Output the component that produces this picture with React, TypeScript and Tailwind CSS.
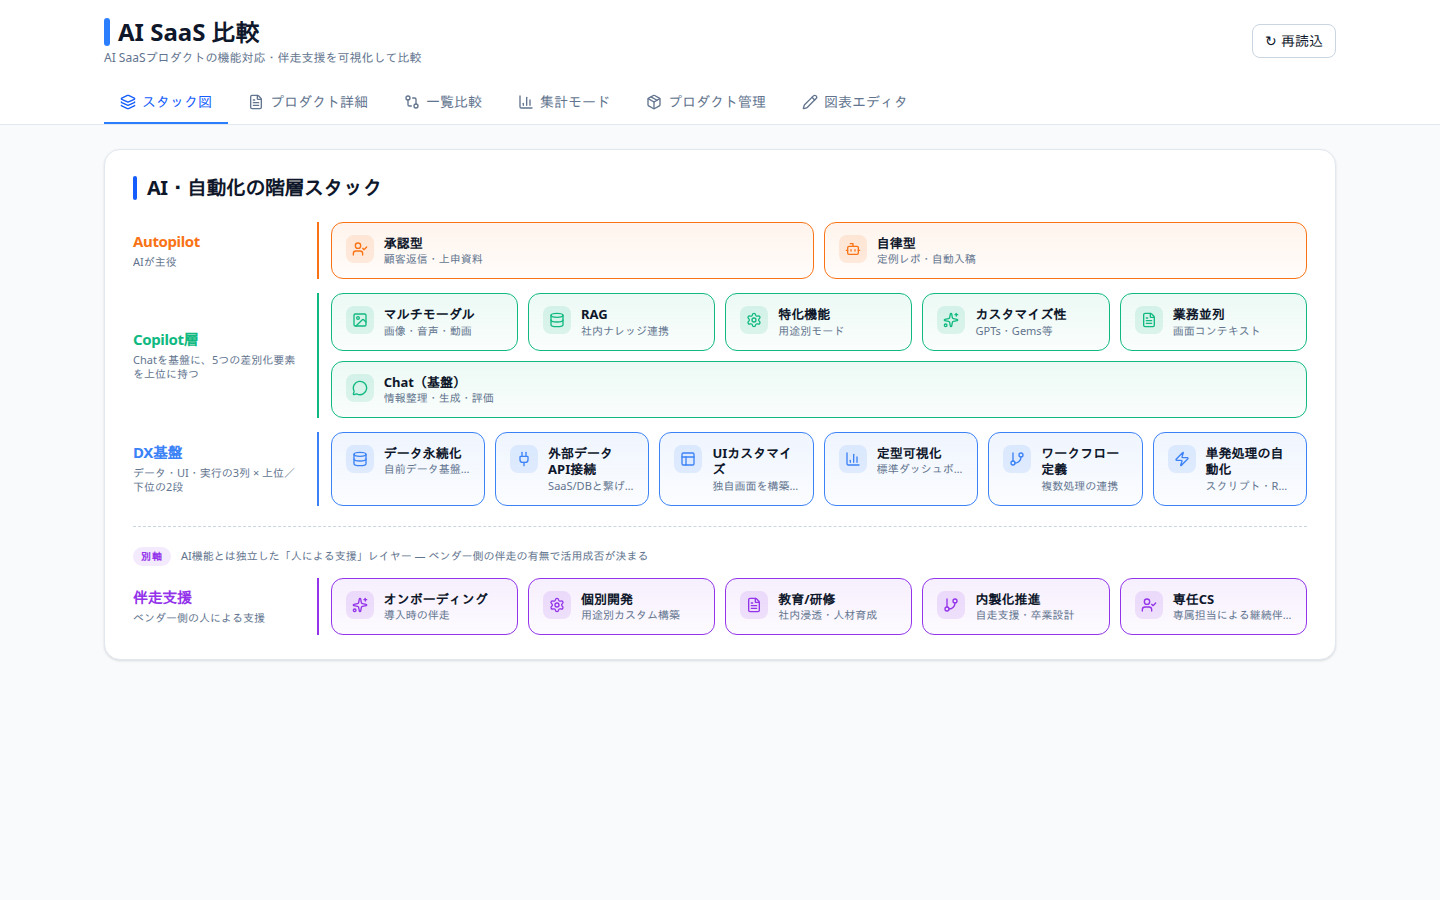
import React from 'react';
import {
  ChartColumn,
  Database,
  FileText,
  GitBranch,
  GitCompare,
  Image,
  Layers,
  MessageCircle,
  Package,
  PanelsTopLeft,
  Pencil,
  Plug,
  Settings,
  Sparkles,
  Bot,
  UserCheck,
  Zap,
  type LucideIcon,
} from 'lucide-react';

type Tone = 'orange' | 'green' | 'blue' | 'purple';

type Item = { icon: LucideIcon; title: string; sub: string };

type Layer = {
  name: string;
  desc: string;
  tone: Tone;
  rows: { cols: string; items: Item[] }[];
};

const TONES: Record<Tone, { text: string; line: string; card: string; chip: string }> = {
  orange: {
    text: 'text-[#f97316]',
    line: 'border-[#f97316]',
    card: 'border-[#f97316] from-[#f97316]/8 to-[#f97316]/2',
    chip: 'bg-[#f97316]/12 text-[#f97316]',
  },
  green: {
    text: 'text-[#10b981]',
    line: 'border-[#10b981]',
    card: 'border-[#10b981] from-[#10b981]/8 to-[#10b981]/2',
    chip: 'bg-[#10b981]/12 text-[#10b981]',
  },
  blue: {
    text: 'text-[#3b82f6]',
    line: 'border-[#3b82f6]',
    card: 'border-[#3b82f6] from-[#3b82f6]/8 to-[#3b82f6]/2',
    chip: 'bg-[#3b82f6]/12 text-[#3b82f6]',
  },
  purple: {
    text: 'text-[#9333ea]',
    line: 'border-[#9333ea]',
    card: 'border-[#9333ea] from-[#9333ea]/8 to-[#9333ea]/2',
    chip: 'bg-[#9333ea]/12 text-[#9333ea]',
  },
};

const TABS: { icon: LucideIcon; label: string }[] = [
  { icon: Layers, label: 'スタック図' },
  { icon: FileText, label: 'プロダクト詳細' },
  { icon: GitCompare, label: '一覧比較' },
  { icon: ChartColumn, label: '集計モード' },
  { icon: Package, label: 'プロダクト管理' },
  { icon: Pencil, label: '図表エディタ' },
];

const LAYERS: Layer[] = [
  {
    name: 'Autopilot',
    desc: 'AIが主役',
    tone: 'orange',
    rows: [
      {
        cols: 'grid-cols-2',
        items: [
          { icon: UserCheck, title: '承認型', sub: '顧客返信・上申資料' },
          { icon: Bot, title: '自律型', sub: '定例レポ・自動入稿' },
        ],
      },
    ],
  },
  {
    name: 'Copilot層',
    desc: 'Chatを基盤に、5つの差別化要素を上位に持つ',
    tone: 'green',
    rows: [
      {
        cols: 'grid-cols-5',
        items: [
          { icon: Image, title: 'マルチモーダル', sub: '画像・音声・動画' },
          { icon: Database, title: 'RAG', sub: '社内ナレッジ連携' },
          { icon: Settings, title: '特化機能', sub: '用途別モード' },
          { icon: Sparkles, title: 'カスタマイズ性', sub: 'GPTs・Gems等' },
          { icon: FileText, title: '業務並列', sub: '画面コンテキスト' },
        ],
      },
      {
        cols: 'grid-cols-1',
        items: [{ icon: MessageCircle, title: 'Chat（基盤）', sub: '情報整理・生成・評価' }],
      },
    ],
  },
  {
    name: 'DX基盤',
    desc: 'データ・UI・実行の3列 × 上位／下位の2段',
    tone: 'blue',
    rows: [
      {
        cols: 'grid-cols-6',
        items: [
          { icon: Database, title: 'データ永続化', sub: '自前データ基盤を持つ' },
          { icon: Plug, title: '外部データAPI接続', sub: 'SaaS/DBと繋げられる' },
          { icon: PanelsTopLeft, title: 'UIカスタマイズ', sub: '独自画面を構築できる' },
          { icon: ChartColumn, title: '定型可視化', sub: '標準ダッシュボード' },
          { icon: GitBranch, title: 'ワークフロー定義', sub: '複数処理の連携' },
          { icon: Zap, title: '単発処理の自動化', sub: 'スクリプト・RPA化' },
        ],
      },
    ],
  },
];

const SUPPORT: Layer = {
  name: '伴走支援',
  desc: 'ベンダー側の人による支援',
  tone: 'purple',
  rows: [
    {
      cols: 'grid-cols-5',
      items: [
        { icon: Sparkles, title: 'オンボーディング', sub: '導入時の伴走' },
        { icon: Settings, title: '個別開発', sub: '用途別カスタム構築' },
        { icon: FileText, title: '教育/研修', sub: '社内浸透・人材育成' },
        { icon: GitBranch, title: '内製化推進', sub: '自走支援・卒業設計' },
        { icon: UserCheck, title: '専任CS', sub: '専属担当による継続伴走' },
      ],
    },
  ],
};

function StackCard({ item, tone }: { item: Item; tone: Tone }) {
  const Icon = item.icon;
  return (
    <div
      className={`flex min-w-0 items-start gap-2.5 rounded-xl border bg-linear-to-b px-3.5 py-3 ${TONES[tone].card}`}
    >
      <span
        className={`flex size-7 shrink-0 items-center justify-center rounded-lg ${TONES[tone].chip}`}
      >
        <Icon size={16} />
      </span>
      <div className="min-w-0 flex-1">
        <div className="text-[13px] leading-[16.25px] font-bold text-slate-900">{item.title}</div>
        <div className="truncate text-[11px] leading-[15.125px] text-slate-500">{item.sub}</div>
      </div>
    </div>
  );
}

function LayerRow({ layer }: { layer: Layer }) {
  return (
    <section className="grid grid-cols-[167.72px_1fr] gap-4">
      <div className="flex flex-col justify-center pb-0.5">
        <div
          className={`text-[15px] leading-[22px] font-bold tracking-tight ${TONES[layer.tone].text}`}
        >
          {layer.name}
        </div>
        <div className="mt-[3px] text-[11px] leading-[14.3px] text-slate-500">{layer.desc}</div>
      </div>
      <div className={`flex min-w-0 flex-col gap-2.5 border-l-2 pl-3 ${TONES[layer.tone].line}`}>
        {layer.rows.map((row, i) => (
          <div key={i} className={`grid gap-2.5 ${row.cols}`}>
            {row.items.map((item) => (
              <StackCard key={item.title} item={item} tone={layer.tone} />
            ))}
          </div>
        ))}
      </div>
    </section>
  );
}

export default function App() {
  const [active, setActive] = React.useState(0);

  return (
    <div
      lang="ja"
      className="min-h-screen bg-slate-50 font-['Noto_Sans','IPAGothic','Noto_Sans_CJK_JP',sans-serif] text-slate-900"
    >
      <header className="border-b border-slate-200 bg-white">
        <div className="mx-auto max-w-[1280px] px-6 pt-4">
          <div className="flex h-[50px] items-center justify-between">
            <div>
              <h1 className="flex items-center gap-2 text-2xl font-bold">
                <span className="h-7 w-1.5 rounded-sm bg-[#2b7fff]" />
                AI SaaS 比較
              </h1>
              <p className="mt-0.5 text-xs text-slate-500">
                AI SaaSプロダクトの機能対応・伴走支援を可視化して比較
              </p>
            </div>
            <button className="h-[34px] rounded-lg border border-slate-300 bg-white px-3 text-sm">
              ↻ 再読込
            </button>
          </div>
          <nav className="mt-3.5 flex gap-1">
            {TABS.map(({ icon: Icon, label }, i) => (
              <button
                key={label}
                onClick={() => setActive(i)}
                className={`flex h-11 items-center gap-1.5 border-b-2 px-4 pt-0.5 text-sm ${
                  i === active
                    ? 'border-[#2b7fff] text-[#155dfc]'
                    : 'border-transparent text-slate-500'
                }`}
              >
                <Icon size={16} />
                {label}
              </button>
            ))}
          </nav>
        </div>
      </header>

      <main className="mx-auto max-w-[1280px] px-6 py-6">
        <div className="rounded-2xl border border-slate-200 bg-white px-7 py-6 shadow-sm">
          <h2 className="mb-5 flex items-center gap-2.5 text-xl leading-7 font-bold tracking-tight">
            <span className="h-6 w-1 rounded-xs bg-[#155dfc]" />
            AI・自動化の階層スタック
          </h2>

          <div className="flex flex-col gap-3.5">
            {LAYERS.map((layer) => (
              <LayerRow key={layer.name} layer={layer} />
            ))}
          </div>

          <div className="mt-5 border-t border-dashed border-slate-300 pt-5">
            <div className="mb-3 flex items-center gap-2.5">
              <span className="rounded-full bg-[#9333ea]/10 px-2 py-0.5 text-[10px] leading-[15px] font-bold tracking-widest text-[#9333ea]">
                別軸
              </span>
              <span className="text-[11px] leading-4 text-slate-500">
                AI機能とは独立した「人による支援」レイヤー — ベンダー側の伴走の有無で活用成否が決まる
              </span>
            </div>
            <LayerRow layer={SUPPORT} />
          </div>
        </div>
      </main>
    </div>
  );
}
